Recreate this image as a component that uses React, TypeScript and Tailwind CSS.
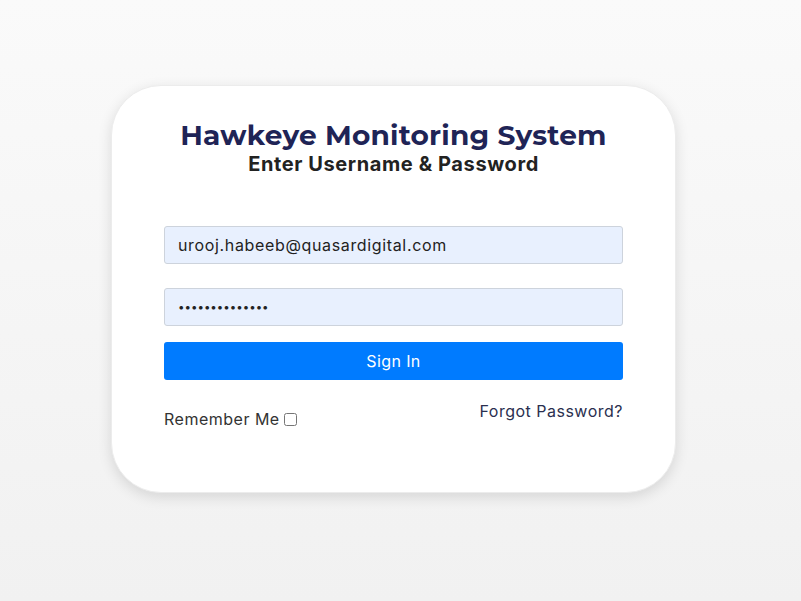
export default function App() {
  return (
    <div className="min-h-[601px] w-full bg-gradient-to-b from-[#fafafa] to-[#f1f1f1] pt-[85px] pl-[111px] font-['Inter',sans-serif]">
      <div className="w-[565px] h-[408px] bg-white rounded-[50px] shadow-[0_4px_14px_rgba(0,0,0,0.12)] border border-[#ececec] px-[52px] pt-[31px]">
        <h1 className="text-center font-['Montserrat','Inter',sans-serif] font-bold text-[28px] leading-[36px] text-[#1f2456] tracking-[0.2px]">
          Hawkeye Monitoring System
        </h1>
        <h2 className="text-center font-bold text-[20px] leading-[24px] text-[#222] -mt-[1px] tracking-[0.6px]">
          Enter Username &amp; Password
        </h2>
        <div className="mt-[50px] flex flex-col">
          <input
            readOnly
            value="urooj.habeeb@quasardigital.com"
            className="h-[38px] w-full rounded-[3px] border border-[#cdd3dc] bg-[#e8f0fe] px-[13px] text-[16px] tracking-[0.65px] text-[#222] outline-none"
          />
          <input
            readOnly
            type="password"
            value="abcdefghijklmn"
            className="mt-[24px] h-[38px] w-full rounded-[3px] border border-[#cdd3dc] bg-[#e8f0fe] px-[13px] text-[11.5px] text-[#222] outline-none"
          />
          <button className="mt-[16px] h-[38px] w-full rounded-[3px] bg-[#007bff] text-[16px] tracking-[0.4px] text-white">
            Sign In
          </button>
          <div className="mt-[19px] flex items-start justify-between text-[16px] tracking-[0.5px] text-[#333]">
            <label className="mt-[8px] flex items-center gap-[4px]">
              Remember Me
              <input type="checkbox" className="h-[13px] w-[13px]" />
            </label>
            <a className="text-[#2a2f4f]">Forgot Password?</a>
          </div>
        </div>
      </div>
    </div>
  );
}
